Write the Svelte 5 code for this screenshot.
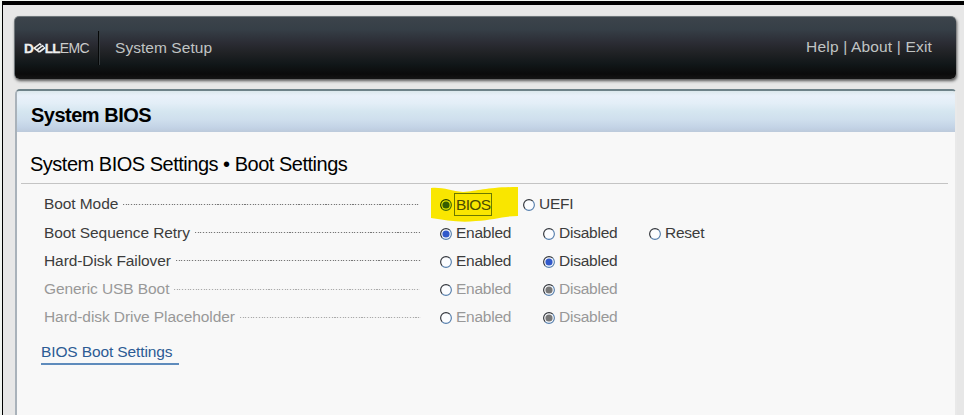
<script>
  const rows = [
    { label: 'Boot Mode', end: 419, options: [['BIOS', true, 83], ['UEFI', false, 100]] },
    { label: 'Boot Sequence Retry', end: 420, options: [['Enabled', true, 103], ['Disabled', false, 106], ['Reset', false, 80]] },
    { label: 'Hard-Disk Failover', end: 421, options: [['Enabled', false, 103], ['Disabled', true, 106]] },
    { label: 'Generic USB Boot', end: 420, off: true, options: [['Enabled', false, 103], ['Disabled', true, 106]] },
    { label: 'Hard-disk Drive Placeholder', end: 421, off: true, options: [['Enabled', false, 103], ['Disabled', true, 106]] }
  ];
</script>

<div class="screen">
  <div class="frame">
    <header>
      <div class="logo">
        <b>D</b>
        <svg class="tilt" width="13" height="12" viewBox="0 0 13 12" fill="none" stroke="#eee" stroke-width="1.6">
          <path d="M6.4 10 1.2 6.2 6.8 1.9 8.2 3M3.8 8.1 9.4 3.7 10.7 4.8M6.4 10 12.2 5.5" />
        </svg>
        <b class="ll">LL</b><span>EMC</span>
      </div>
      <i class="divider"></i>
      <div class="product">System Setup</div>
      <nav>Help | About | Exit</nav>
    </header>
    <main>
      <h1>System BIOS</h1>
      <h2>System BIOS Settings • Boot Settings</h2>
      <div class="rows">
        {#each rows as row, i}
          <div class="row" class:off={row.off}>
            <div class="name" style="width: {row.end - 44}px">
              <span>{row.label}</span><i class="dots"></i>
            </div>
            <div class="options">
              {#if i === 0}
                <svg class="marker" width="88" height="37" viewBox="0 0 88 37">
                  <path d="M0 2C12 1 20 5 32 6C48 5 58 1 87 1V30C72 30 62 34 45 35C28 37 15 34 0 32Z" fill="#f9e600" />
                </svg>
              {/if}
              {#each row.options as [text, on, width], n}
                <div class="option" class:focused={i === 0 && n === 0} style="width: {width}px">
                  <svg class="radio" width="12" height="12" viewBox="0 0 12 12" fill="none">
                    <circle cx="6" cy="6" r="5.2" fill={i === 0 && n === 0 ? '#e4e500' : '#fcfdff'} />
                    <path d="M2.2 9.8A5.35 5.35 0 0 1 9.8 2.2" stroke={i === 0 && n === 0 ? '#203b00' : '#30343a'} stroke-width="1.15" />
                    <path d="M9.8 2.2A5.35 5.35 0 0 1 2.2 9.8" stroke={i === 0 && n === 0 ? '#446b08' : '#567fad'} stroke-width="1.15" />
                    {#if on}
                      <circle cx="6" cy="6" r="3.6" fill={row.off ? '#777' : i === 0 ? '#355c00' : '#3159ca'} />
                    {/if}
                  </svg>
                  <span>{text}</span>
                </div>
              {/each}
            </div>
          </div>
        {/each}
      </div>
      <div class="link">BIOS Boot Settings</div>
    </main>
  </div>
</div>

<style>
  .screen {
    width: 964px;
    height: 415px;
    box-sizing: border-box;
    padding: 1px 0 0 2px;
    overflow: hidden;
    background: #f0f4f0;
    font-family: "Liberation Sans", Arial, sans-serif;
    font-size: 15.5px;
  }
  .frame {
    height: 414px;
    box-sizing: border-box;
    border-top: 4px solid #000;
    border-left: 1px solid #000;
    padding: 11px 8px 0 11px;
    background: #e7e7e7;
  }
  header {
    display: flex;
    align-items: center;
    height: 63px;
    box-sizing: border-box;
    border-top: 1px solid #6d7579;
    border-left: 1px solid #70777b;
    border-radius: 5px;
    padding: 0 24px 0 9px;
    background: linear-gradient(#3c444b 0, #363f47 20%, #2b2c34 42%, #202225 58%, #111719 76%, #0b0b0b 92%, #151515 100%);
    box-shadow: 1px 2px 3px #555;
    color: #c0c4c4;
  }
  .logo {
    display: flex;
    align-items: center;
    width: 74px;
    height: 16px;
    font-size: 14px;
    color: #eee;
  }
  .logo b { font-size: 13.5px; -webkit-text-stroke: .3px #eee; }
  .logo .ll { letter-spacing: -.8px; width: 15px; }
  .logo span { letter-spacing: -.6px; color: #ccc; }
  .tilt { flex: none; width: 13px; margin: 0 -1px; }
  .divider {
    width: 1px;
    height: 34px;
    border-right: 1px solid #353b3e;
    background: #060808;
  }
  .product { margin-left: 15px; letter-spacing: .05px; }
  nav { margin-left: auto; letter-spacing: .17px; white-space: pre; position: relative; top: -1px; }
  main {
    height: 330px;
    margin: 10px -1px 0 1px;
    box-sizing: border-box;
    border-top: 2px solid #6e8289;
    border-left: 2px solid #a9b2ba;
    border-right: 2px solid #e9e9e9;
    border-radius: 5px 5px 0 0;
    background: #f8f8f8;
    overflow: hidden;
  }
  h1, h2 { margin: 0; color: #000; font-size: 20px; white-space: nowrap; }
  h1 {
    height: 41px;
    line-height: 48px;
    padding-left: 14px;
    letter-spacing: -.5px;
    background: linear-gradient(#dce8ed 0, #e9f1fa 12%, #e3eef7 30%, #d5e6f0 50%, #cfdfed 70%, #c2d2e5 90%, #bccadb 100%);
  }
  h2 {
    height: 51px;
    line-height: 65px;
    margin: 0 7px 0 4px;
    padding-left: 9px;
    border-bottom: 1px solid #c4c4c4;
    font-weight: 400;
    letter-spacing: -.49px;
  }
  .rows { padding: 6.4px 0 0 27px; }
  .row { display: flex; align-items: center; height: 28.2px; color: #3c3c3c; }
  .name { display: flex; align-items: center; flex: none; white-space: nowrap; letter-spacing: -.08px; }
  .dots {
    flex: 1;
    height: 1px;
    margin: 0 0 0 5px;
    background: repeating-linear-gradient(90deg, #777 0 1px, #e4e4e4 1px 2.7px);
  }
  .options { display: flex; position: absolute; left: 440px; letter-spacing: -.24px; }
  .option { display: flex; align-items: center; }
  .option span { margin-left: 4px; position: relative; }
  .radio { flex: none; position: relative; top: 1px; }
  .marker { position: absolute; left: -9px; top: -9px; }
  .focused { position: relative; color: #4b4b00; }
  .focused span { outline: 1px solid #6b7900; outline-offset: 1px; padding: 1px 0 0; letter-spacing: -.65px; }
  .off { color: #989898; }
  .off .dots { opacity: .6; }
  .link {
    width: 138px;
    height: 25px;
    margin: 6.6px 0 0 24px;
    line-height: 28px;
    letter-spacing: -.12px;
    border-bottom: 2px solid #5e8bbc;
    color: #2c5b94;
    white-space: nowrap;
  }
</style>
